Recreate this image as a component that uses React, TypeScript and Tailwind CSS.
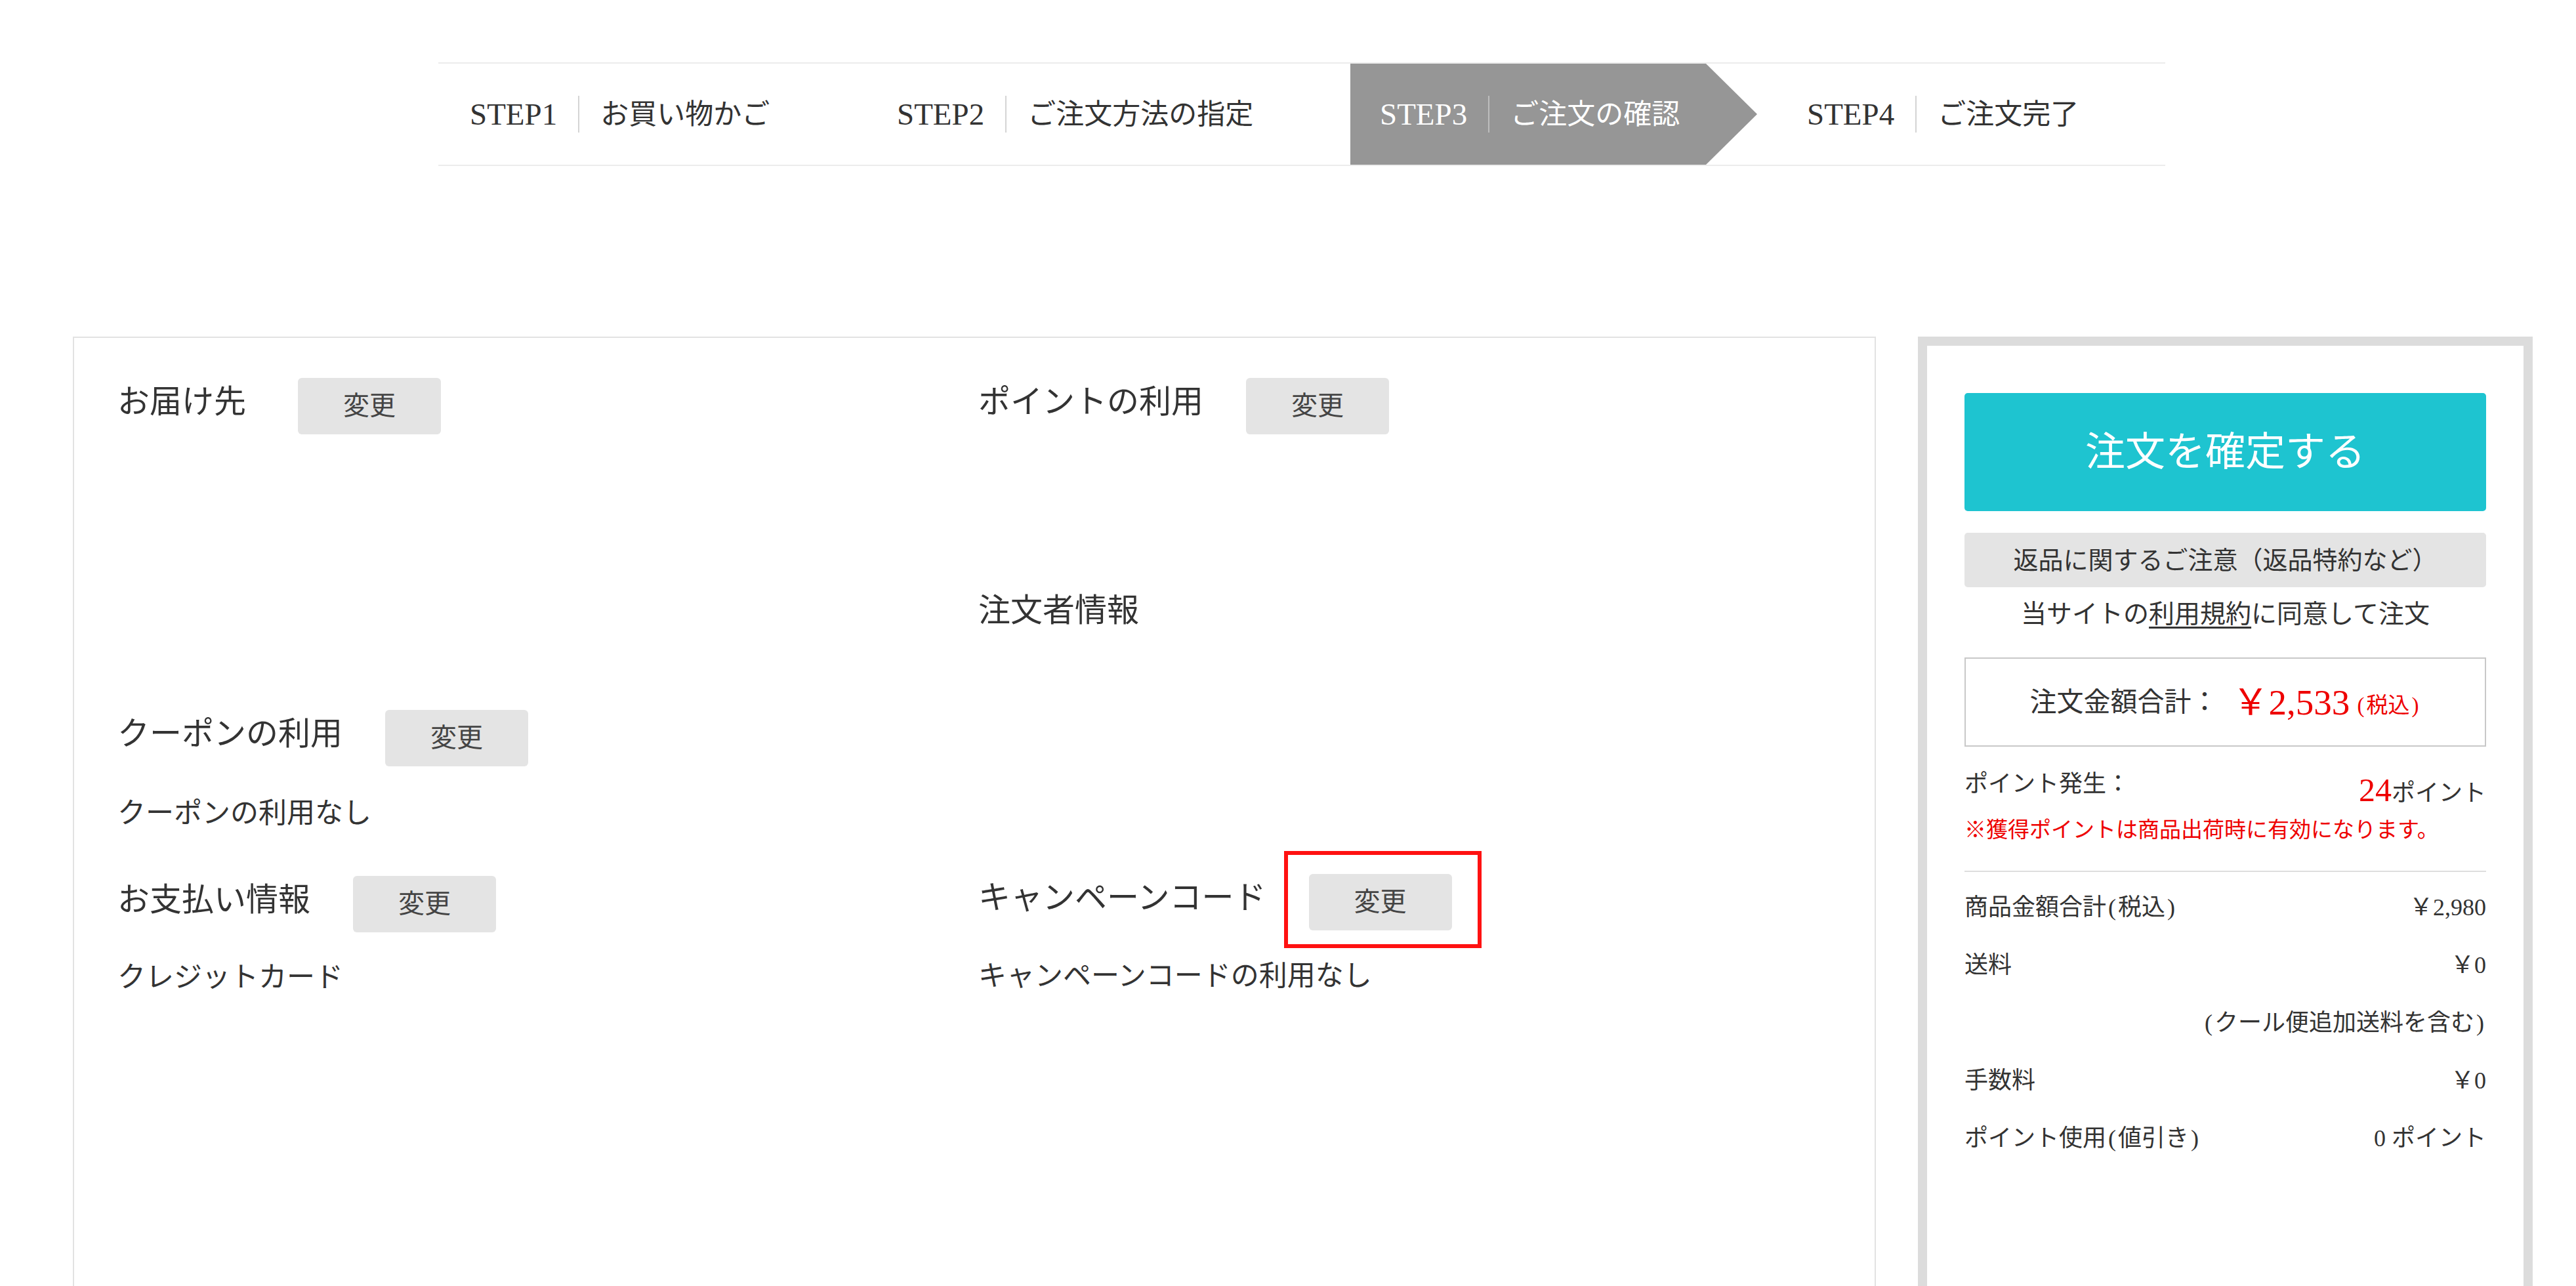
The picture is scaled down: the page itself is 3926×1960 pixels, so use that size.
import React from "react";

type Step = { no: string; label: string; width: string; pad: string; active?: boolean };

const STEPS: Step[] = [
  { no: "STEP1", label: "お買い物かご", width: "w-[652px]", pad: "pl-[48px]" },
  { no: "STEP2", label: "ご注文方法の指定", width: "w-[738px]", pad: "pl-[47px]" },
  { no: "STEP3", label: "ご注文の確認", width: "w-[542px]", pad: "pl-[45px]", active: true },
  { no: "STEP4", label: "ご注文完了", width: "flex-1", pad: "pl-[76px]" },
];

const StepBar = () => (
  <div className="pl-[668px] pt-[95px]">
    <div className="flex h-[158px] w-[2632px] border-y-2 border-[#ececec]">
      {STEPS.map((s) => (
        <React.Fragment key={s.no}>
          <div
            className={`flex items-center ${s.width} ${s.pad} ${
              s.active ? "bg-[#969696] text-white" : "text-[#333]"
            }`}
          >
            <span className="text-[47px] leading-none">{s.no}</span>
            <span className={`mx-[32px] h-[56px] w-[2px] ${s.active ? "bg-[#bdbdbd]" : "bg-[#d4d4d4]"}`} />
            <span className="text-[43px] leading-none">{s.label}</span>
          </div>
          {s.active && (
            <svg className="h-full w-[78px]" viewBox="0 0 78 154" preserveAspectRatio="none">
              <polygon points="0,0 78,77 0,154" fill="#969696" />
            </svg>
          )}
        </React.Fragment>
      ))}
    </div>
  </div>
);

const ChangeButton = () => (
  <button className="flex h-[86px] w-[218px] items-center justify-center rounded-[6px] bg-[#e4e4e4] text-[40px] leading-none text-[#444]">
    変更
  </button>
);

const Heading = ({ title, gap = "ml-[65px]", btn = true }: { title: string; gap?: string; btn?: boolean }) => (
  <div className="flex h-[86px] items-center">
    <h3 className="pb-[14px] text-[49px] font-normal leading-none text-[#333]">{title}</h3>
    {btn && (
      <div className={gap}>
        <ChangeButton />
      </div>
    )}
  </div>
);

const Body = ({ children, mt }: { children: React.ReactNode; mt: string }) => (
  <p className={`${mt} text-[43px] leading-[60px] text-[#333]`}>{children}</p>
);

const OrderCard = () => (
  <div className="h-[1500px] w-[2748px] border-2 border-[#e2e2e2] px-[66px] pt-[61px]">
    <div className="grid grid-cols-[1312px_1fr]">
      {/* row 1 */}
      <div className="h-[308px]">
        <Heading title="お届け先" gap="ml-[79px]" />
      </div>
      <div className="h-[308px]">
        <Heading title="ポイントの利用" />
      </div>

      {/* row 2 */}
      <div className="h-[198px]" />
      <div className="h-[198px] pt-[10px]">
        <Heading title="注文者情報" btn={false} />
      </div>

      {/* row 3 */}
      <div className="h-[253px]">
        <Heading title="クーポンの利用" />
        <Body mt="mt-[42px]">クーポンの利用なし</Body>
      </div>
      <div className="h-[253px]" />

      {/* row 4 */}
      <div>
        <Heading title="お支払い情報" />
        <Body mt="mt-[39px]">クレジットカード</Body>
      </div>
      <div className="-mt-[3px]">
        <div className="flex h-[86px] items-center">
          <h3 className="pb-[14px] text-[49px] font-normal leading-none text-[#333]">キャンペーンコード</h3>
          <div className="relative ml-[65px]">
            <ChangeButton />
            <div className="absolute -left-[38px] -top-[35px] h-[148px] w-[301px] border-[6px] border-[#ff1111]" />
          </div>
        </div>
        <Body mt="mt-[40px]">キャンペーンコードの利用なし</Body>
      </div>
    </div>
  </div>
);

// half-width parens in the serif are narrower than the reference's, so pad them a little
const P = ({ c }: { c: string }) => <span className="px-[3px]">{c}</span>;

const SummaryRow = ({ label, value }: { label: React.ReactNode; value: string }) => (
  <div className="flex justify-between text-[36px] leading-[88px] text-[#333]">
    <span>{label}</span>
    <span>{value}</span>
  </div>
);

const SummaryPanel = () => (
  <aside className="h-[1500px] w-[937px] border-[14px] border-[#dcdcdc] px-[57px] pt-[72px]">
    <button className="flex h-[180px] w-full items-center justify-center rounded-[5px] bg-[#1ec4d0] text-[61px] leading-none text-white">
      注文を確定する
    </button>
    <div className="mt-[33px] flex h-[83px] items-center justify-center rounded-[5px] bg-[#e4e4e4] text-[38px] leading-none text-[#333]">
      返品に関するご注意（返品特約など）
    </div>
    <p className="mt-[16px] text-center text-[39px] leading-[50px] text-[#333]">
      当サイトの<span className="underline underline-offset-[6px]">利用規約</span>に同意して注文
    </p>

    <div className="mt-[41px] flex h-[136px] items-center justify-center border-2 border-[#c8c8c8]">
      <span className="text-[41px] leading-none text-[#333]">注文金額合計：</span>
      <span className="ml-[22px] text-[55px] leading-none text-[#ee0000]">￥2,533</span>
      <span className="ml-[8px] pt-[10px] text-[33px] leading-none text-[#ee0000]">
        <P c="(" />税込<P c=")" />
      </span>
    </div>

    <div className="mt-[32px] flex items-start justify-between">
      <span className="text-[36px] leading-[50px] text-[#333]">ポイント発生：</span>
      <span className="text-[36px] leading-[68px] text-[#333]">
        <span className="text-[50px] text-[#ee0000]">24</span>ポイント
      </span>
    </div>
    <p className="text-[33px] leading-[44px] text-[#ee0000]">※獲得ポイントは商品出荷時に有効になります。</p>

    <div className="mt-[40px] h-[2px] bg-[#dedede]" />

    <div className="mt-[10px]">
      <SummaryRow label={<>商品金額合計<P c="(" />税込<P c=")" /></>} value="￥2,980" />
      <SummaryRow label="送料" value="￥0" />
      <div className="text-right text-[36px] leading-[88px] text-[#333]">
        <P c="(" />クール便追加送料を含む<P c=")" />
      </div>
      <SummaryRow label="手数料" value="￥0" />
      <SummaryRow label={<>ポイント使用<P c="(" />値引き<P c=")" /></>} value="0 ポイント" />
    </div>
  </aside>
);

export default function App() {
  return (
    <div className="h-[1960px] w-[3926px] overflow-hidden bg-white font-['Liberation_Serif','Noto_Sans_CJK_JP',serif]">
      <StepBar />
      <div className="mt-[260px] flex items-start gap-[64px] pl-[111px]">
        <OrderCard />
        <SummaryPanel />
      </div>
    </div>
  );
}
